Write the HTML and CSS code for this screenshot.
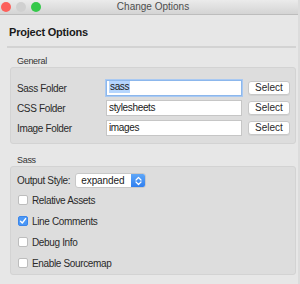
FILE: index.html
```html
<!DOCTYPE html>
<html lang="en">
<head>
    <meta charset="UTF-8">
    <title>Change Options</title>
    <link rel="stylesheet" href="styles.css">
</head>
<body>
    <div class="window">

        <!-- Title bar -->
        <div class="titlebar">
            <div class="lights">
                <span class="light red"></span>
                <span class="light yellow"></span>
                <span class="light green"></span>
            </div>
            <div class="title">Change Options</div>
            <div></div>
        </div>

        <div class="content">
            <h1>Project Options</h1>
            <div class="separator"></div>

            <!-- General -->
            <div class="group-label">General</div>
            <div class="group general">
                <div class="row">
                    <span class="label">Sass Folder</span>
                    <div class="field focused"><span class="selected">sass</span></div>
                    <button class="btn">Select</button>
                </div>
                <div class="row">
                    <span class="label">CSS Folder</span>
                    <div class="field">stylesheets</div>
                    <button class="btn">Select</button>
                </div>
                <div class="row">
                    <span class="label">Image Folder</span>
                    <div class="field">images</div>
                    <button class="btn">Select</button>
                </div>
            </div>

            <!-- Sass -->
            <div class="group-label sass-label">Sass</div>
            <div class="group sass">
                <div class="style-row">
                    <span>Output Style:</span>
                    <div class="dropdown">
                        <span class="dropdown-value">expanded</span>
                        <span class="dropdown-arrows">
                            <svg width="7" height="10" viewBox="0 0 7 10">
                                <path d="M1 4 L3.5 1.5 L6 4 M1 6 L3.5 8.5 L6 6" fill="none" stroke="#fff" stroke-width="1.2" stroke-linecap="round" stroke-linejoin="round"/>
                            </svg>
                        </span>
                    </div>
                </div>
                <div class="check-row"><span class="checkbox"></span>Relative Assets</div>
                <div class="check-row">
                    <span class="checkbox checked">
                        <svg width="8" height="8" viewBox="0 0 8 8">
                            <path d="M1.5 4.2 L3.3 6 L6.6 1.6" fill="none" stroke="#fff" stroke-width="1.4" stroke-linecap="round" stroke-linejoin="round"/>
                        </svg>
                    </span>Line Comments
                </div>
                <div class="check-row"><span class="checkbox"></span>Debug Info</div>
                <div class="check-row"><span class="checkbox"></span>Enable Sourcemap</div>
            </div>
        </div>
    </div>
</body>
</html>
```

FILE: styles.css
```css
/* General */
body {
    margin: 0;
    width: 300px;
    height: 284px;
    overflow: hidden;
    background-color: #dcdcdc;
    font-family: 'Liberation Sans', Arial, sans-serif;
    font-size: 10px;
    letter-spacing: -0.35px;
    color: #2a2a2a;
}

.window {
    width: 298px;
    height: 284px;
    background-color: #e7e7e7;
}

/* Title bar */
.titlebar {
    height: 14px;
    display: grid;
    grid-template-columns: 1fr auto 1fr;
    align-items: center;
    background: linear-gradient(#ebebeb, #d4d4d4);
    border-bottom: 1px solid #bdbdbd;
}

.lights {
    display: flex;
    gap: 5px;
    padding-left: 1px;
}

.light {
    width: 10px;
    height: 10px;
    border-radius: 50%;
}

.red { background-color: #fc605b; }
.yellow { background-color: #d0d0d0; }
.green { background-color: #34c84a; }

.title {
    padding-left: 8px;
    font-size: 10px;
    letter-spacing: 0;
    color: #4d4d4d;
    line-height: 14px;
}

/* Content */
.content {
    padding: 0 2px 0 7px;
}

h1 {
    margin: 11px 0 0;
    padding-left: 2px;
    font-size: 11px;
    line-height: 13px;
    letter-spacing: -0.2px;
    font-weight: bold;
    color: #1a1a1a;
}

.separator {
    height: 2px;
    margin-top: 7px;
    background-color: #d3d3d3;
}

.group-label {
    margin: 8px 0 0 10px;
    font-size: 9px;
    line-height: 11px;
    letter-spacing: -0.3px;
    color: #333;
}

.sass-label {
    margin-top: 11px;
}

.group {
    margin-left: 3px;
    background-color: #dddddd;
    border: 1px solid #d3d3d3;
    border-radius: 3px;
}

/* General group rows */
.general {
    display: flex;
    flex-direction: column;
    gap: 4px;
    padding: 12px 5px 7px 6px;
}

.row {
    display: flex;
    align-items: center;
    height: 16px;
}

.label {
    width: 89px;
}

.field {
    box-sizing: border-box;
    width: 136px;
    height: 16px;
    padding: 0 2px;
    line-height: 14px;
    background-color: #fff;
    border: 1px solid #c6c6c6;
    color: #1a1a1a;
}

.field.focused {
    border-color: #8cb7ec;
    box-shadow: 0 0 0 1px #a9c9f2;
}

.selected {
    display: inline-block;
    padding: 0 1px;
    line-height: 12px;
    vertical-align: 1px;
    background-color: #b5d5fd;
}

.btn {
    box-sizing: border-box;
    margin-left: 6px;
    width: 42px;
    height: 14px;
    padding: 0;
    font-family: inherit;
    font-size: 10px;
    letter-spacing: 0;
    line-height: 12px;
    color: #2a2a2a;
    background-color: #fff;
    border: 1px solid #c8c8c8;
    border-radius: 3px;
    box-shadow: 0 1px 0 rgba(0, 0, 0, 0.05);
}

/* Sass group */
.sass {
    padding: 6px 5px 3px 6px;
}

.style-row {
    display: flex;
    align-items: center;
    gap: 5px;
    height: 15px;
}

.dropdown {
    box-sizing: border-box;
    display: flex;
    width: 71px;
    height: 15px;
    background-color: #fff;
    border: 1px solid #c8c8c8;
    border-radius: 3px;
    overflow: hidden;
}

.dropdown-value {
    flex-grow: 1;
    padding-left: 5px;
    line-height: 13px;
    letter-spacing: -0.1px;
    color: #1a1a1a;
}

.dropdown-arrows {
    width: 14px;
    display: flex;
    align-items: center;
    justify-content: center;
    background: linear-gradient(#5fa7f8, #2f7ff0);
}

.check-row {
    display: flex;
    align-items: center;
    height: 16px;
    margin-top: 5px;
}

.style-row + .check-row {
    margin-top: 4px;
}

.checkbox {
    box-sizing: border-box;
    width: 10px;
    height: 10px;
    margin: 0 4px 0 1px;
    background-color: #fff;
    border: 1px solid #bdbdbd;
    border-radius: 2px;
    display: flex;
    align-items: center;
    justify-content: center;
}

.checkbox.checked {
    background-color: #4a97f6;
    border-color: #3b86ea;
}
```
